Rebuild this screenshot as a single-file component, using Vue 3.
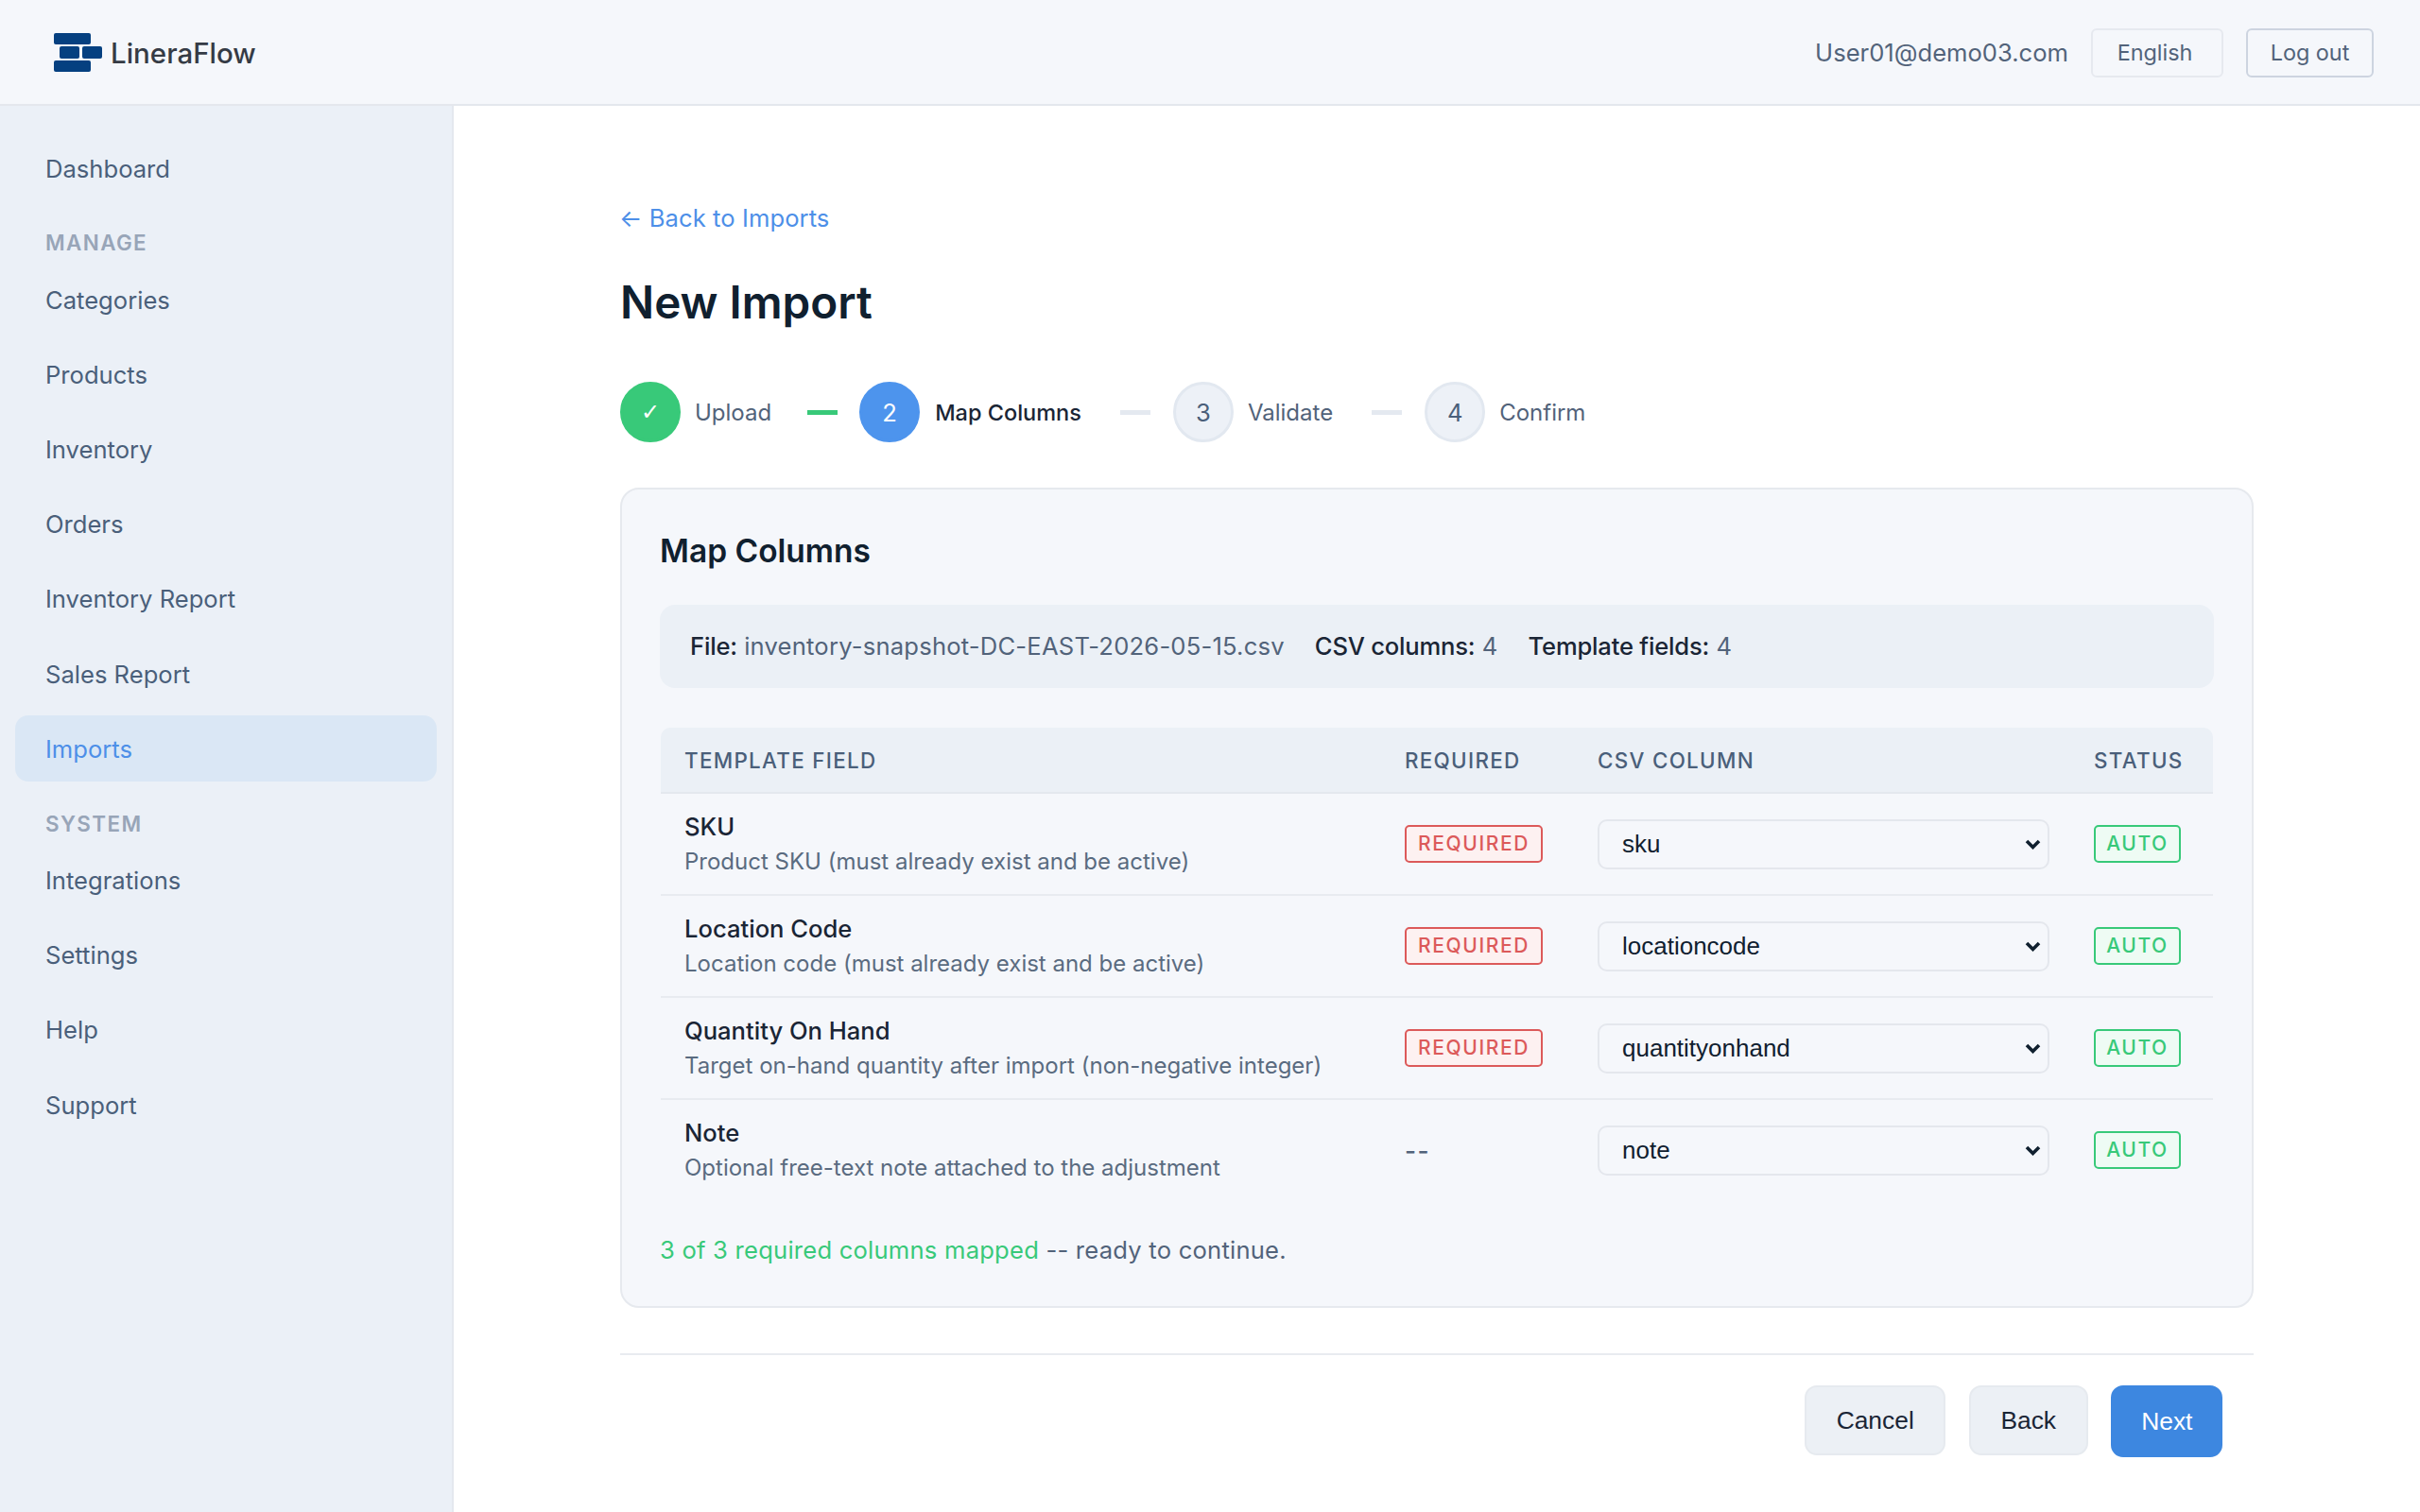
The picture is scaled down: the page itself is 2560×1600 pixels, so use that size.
<script setup>
import { ref } from "vue";

const mainNav = ["Categories", "Products", "Inventory", "Orders", "Inventory Report", "Sales Report", "Imports"];
const systemNav = ["Integrations", "Settings", "Help", "Support"];

const steps = [
  { num: "✓", label: "Upload", state: "done" },
  { num: "2", label: "Map Columns", state: "active" },
  { num: "3", label: "Validate", state: "" },
  { num: "4", label: "Confirm", state: "" },
];

const rows = ref([
  { name: "SKU", desc: "Product SKU (must already exist and be active)", required: true, column: "sku" },
  { name: "Location Code", desc: "Location code (must already exist and be active)", required: true, column: "locationcode" },
  { name: "Quantity On Hand", desc: "Target on-hand quantity after import (non-negative integer)", required: true, column: "quantityonhand" },
  { name: "Note", desc: "Optional free-text note attached to the adjustment", required: false, column: "note" },
]);
const csvColumns = ["sku", "locationcode", "quantityonhand", "note"];
</script>

<template>
  <div class="app">
    <header class="topbar">
      <div class="brand">
        <svg class="logo" width="51" height="41" viewBox="0 0 51 41">
          <rect x="0" y="0" width="39" height="12" rx="2" />
          <rect x="6" y="14" width="21" height="13" rx="2" />
          <rect x="30" y="14" width="21" height="13" rx="2" />
          <rect x="0" y="29" width="39" height="12" rx="2" />
        </svg>
        <span class="brand-name">LineraFlow</span>
      </div>
      <div class="user">
        <span class="email">User01@demo03.com</span>
        <button class="top-btn">English</button>
        <button class="top-btn dark">Log out</button>
      </div>
    </header>

    <div class="body">
      <aside class="sidebar">
        <a class="nav-item">Dashboard</a>
        <div class="nav-label">MANAGE</div>
        <a v-for="item in mainNav" :key="item" class="nav-item" :class="{ active: item === 'Imports' }">{{ item }}</a>
        <div class="nav-label">SYSTEM</div>
        <a v-for="item in systemNav" :key="item" class="nav-item">{{ item }}</a>
      </aside>

      <main class="main">
        <div class="content">
          <a class="back">← Back to Imports</a>
          <h1>New Import</h1>

          <div class="stepper">
            <template v-for="(step, i) in steps" :key="step.label">
              <span v-if="i > 0" class="line" :class="{ green: i === 1 }"></span>
              <div class="step" :class="step.state">
                <span class="circle">{{ step.num }}</span>
                <span class="step-label">{{ step.label }}</span>
              </div>
            </template>
          </div>

          <section class="card">
            <h2>Map Columns</h2>
            <div class="file-bar">
              <span><b>File:</b> inventory-snapshot-DC-EAST-2026-05-15.csv</span>
              <span><b>CSV columns:</b> 4</span>
              <span><b>Template fields:</b> 4</span>
            </div>

            <table>
              <colgroup>
                <col style="width: 762px" />
                <col style="width: 204px" />
                <col style="width: 525px" />
                <col />
              </colgroup>
              <thead>
                <tr>
                  <th>TEMPLATE FIELD</th>
                  <th>REQUIRED</th>
                  <th>CSV COLUMN</th>
                  <th>STATUS</th>
                </tr>
              </thead>
              <tbody>
                <tr v-for="row in rows" :key="row.name">
                  <td>
                    <div class="field-name">{{ row.name }}</div>
                    <div class="field-desc">{{ row.desc }}</div>
                  </td>
                  <td>
                    <span v-if="row.required" class="badge red">REQUIRED</span>
                    <span v-else class="dash">--</span>
                  </td>
                  <td>
                    <div class="select-wrap">
                      <select v-model="row.column">
                        <option v-for="c in csvColumns" :key="c">{{ c }}</option>
                      </select>
                      <svg class="chevron" width="17" height="11" viewBox="0 0 17 11">
                        <path d="M2 2 L8.5 8.5 L15 2" fill="none" stroke="#10202f" stroke-width="3.6" />
                      </svg>
                    </div>
                  </td>
                  <td><span class="badge green">AUTO</span></td>
                </tr>
              </tbody>
            </table>

            <p class="note"><span>3 of 3 required columns mapped</span> -- ready to continue.</p>
          </section>

          <div class="actions">
            <button class="btn">Cancel</button>
            <button class="btn">Back</button>
            <button class="btn primary">Next</button>
          </div>
        </div>
      </main>
    </div>
  </div>
</template>

<style>
html,
body {
  margin: 0;
  background: #fff;
}
</style>

<style scoped>
.app {
  width: 2560px;
  height: 1600px;
  overflow: hidden;
  font-family: Inter, "Liberation Sans", sans-serif;
  font-size: 25.6px;
  color: #1a2535;
  display: flex;
  flex-direction: column;
}
.topbar {
  height: 112px;
  box-sizing: border-box;
  background: #f5f7fb;
  border-bottom: 2px solid #e4e7ed;
  display: flex;
  align-items: center;
  justify-content: space-between;
  padding: 1px 49px 0 57px;
  flex-shrink: 0;
}
.brand {
  display: flex;
  align-items: center;
  gap: 9px;
}
.logo rect {
  fill: #054080;
}
.brand-name {
  font-size: 29.5px;
  font-weight: 500;
  color: #353b45;
}
.user {
  display: flex;
  align-items: center;
}
.email {
  color: #52637a;
  margin-right: 24px;
}
.top-btn {
  font-family: inherit;
  font-size: 23.4px;
  color: #52637a;
  background: transparent;
  border: 2px solid #e6e9ef;
  border-radius: 6px;
  height: 52px;
  width: 140px;
  padding: 0 5px 0 0;
  margin-right: 24px;
}
.top-btn.dark {
  border-color: #cdd4e0;
  width: 135px;
  padding: 0;
  margin-right: 0;
}
.body {
  flex: 1;
  display: flex;
  min-height: 0;
}
.sidebar {
  width: 480px;
  box-sizing: border-box;
  background: #ebf0f7;
  border-right: 2px solid #e4e8ef;
  padding: 31px 16px 0;
  display: flex;
  flex-direction: column;
  flex-shrink: 0;
}
.nav-item {
  height: 70px;
  margin-bottom: 9.2px;
  padding-left: 32px;
  border-radius: 14px;
  display: flex;
  align-items: center;
  color: #4a5f7a;
  flex-shrink: 0;
}
.nav-item.active {
  background: #dae7f5;
  color: #4d8fe8;
}
.nav-label {
  height: 60px;
  box-sizing: border-box;
  padding: 20px 0 10px 32px;
  line-height: 30px;
  font-size: 22.4px;
  font-weight: 600;
  letter-spacing: 1.4px;
  color: #98a5b8;
  flex-shrink: 0;
}
.main {
  flex: 1;
  background: #fff;
}
.content {
  width: 1728px;
  margin: 0 auto;
  padding-top: 102px;
}
.back {
  display: block;
  height: 34px;
  line-height: 34px;
  margin-left: -1px;
  letter-spacing: 0.07px;
  color: #4d8fe8;
}
h1 {
  margin: 42px 0 0;
  height: 60px;
  line-height: 60px;
  font-size: 47.6px;
  font-weight: 600;
  color: #10202f;
}
.stepper {
  margin-top: 54px;
  display: flex;
  align-items: center;
}
.step {
  display: flex;
  align-items: center;
  gap: 15px;
}
.circle {
  width: 64px;
  height: 64px;
  box-sizing: border-box;
  border-radius: 50%;
  border: 3px solid #e2e8f0;
  background: #edf1f7;
  color: #4a5f7a;
  display: flex;
  align-items: center;
  justify-content: center;
}
.step-label {
  color: #52637a;
  font-size: 24px;
}
.step.done .circle {
  background: #38c979;
  border-color: #38c979;
  color: #fff;
  font-family: "DejaVu Sans", sans-serif;
  font-size: 24px;
}
.step.active {
  gap: 16px;
}
.step.active .circle {
  background: #4d94ed;
  border-color: #4d94ed;
  color: #fff;
}
.step.active .step-label {
  color: #1a2535;
  font-size: 23.5px;
  font-weight: 500;
}
.line {
  width: 32px;
  height: 5px;
  margin: 0 24px 0 41px;
  background: #e4e9f0;
}
.line.green {
  margin: 0 23px 0 38px;
  background: #38c979;
}
.card {
  margin-top: 48px;
  height: 868px;
  box-sizing: border-box;
  background: #f5f7fb;
  border: 2px solid #e6e9ee;
  border-radius: 20px;
  padding: 43px 40px 0;
}
h2 {
  margin: 0;
  height: 44px;
  line-height: 44px;
  font-size: 33.5px;
  font-weight: 600;
  color: #10202f;
}
.file-bar {
  margin-top: 35px;
  height: 88px;
  box-sizing: border-box;
  background: #ebf0f6;
  border-radius: 16px;
  padding: 0 32px 2px;
  display: flex;
  align-items: center;
  gap: 32px;
  color: #52637a;
  letter-spacing: 0.2px;
}
.file-bar b {
  font-weight: 500;
  color: #1a2535;
  letter-spacing: -0.2px;
}
table {
  margin: 42px 0 0 1px;
  width: 1642px;
  table-layout: fixed;
  border-collapse: separate;
  border-spacing: 0;
}
th {
  height: 70px;
  padding: 0 25px;
  text-align: left;
  font-size: 22.4px;
  font-weight: 500;
  letter-spacing: 1.3px;
  color: #4a5f7a;
  background: #ebf0f6;
  border-bottom: 2px solid #e4e8ee;
  box-sizing: border-box;
}
th:first-child {
  border-top-left-radius: 10px;
}
th:last-child {
  border-top-right-radius: 10px;
}
td {
  height: 108px;
  box-sizing: border-box;
  padding: 0 25px;
  border-bottom: 2px solid #e8ebf0;
}
td:first-child {
  padding-top: 1px;
}
tbody tr:last-child td {
  border-bottom-color: transparent;
}
.field-name {
  font-weight: 500;
  line-height: 34px;
}
.field-desc {
  font-size: 24px;
  line-height: 36px;
  padding-top: 2px;
  color: #5a6b80;
}
.badge {
  display: inline-block;
  box-sizing: border-box;
  height: 40px;
  line-height: 36px;
  border: 2px solid;
  border-radius: 5px;
  font-size: 21px;
  font-weight: 500;
  letter-spacing: 1.6px;
  text-align: center;
  vertical-align: middle;
}
.badge.red {
  width: 146px;
  color: #dc5a5a;
  border-color: #dc5a5a;
  background: #fdf1f1;
}
.badge.green {
  width: 92px;
  color: #38c979;
  border-color: #38c979;
  background: #eefbf4;
}
.dash {
  color: #52637a;
  font-size: 26px;
  font-weight: 500;
  letter-spacing: 1.5px;
}
.select-wrap {
  position: relative;
  width: 478px;
  height: 53px;
}
select {
  appearance: none;
  width: 100%;
  height: 100%;
  box-sizing: border-box;
  padding: 0 40px 0 24px;
  background: #f5f7fb;
  border: 2px solid #e4e7ed;
  border-radius: 10px;
  font-family: "Liberation Sans", Arial, sans-serif;
  font-size: 26px;
  color: #10202f;
}
.chevron {
  position: absolute;
  right: 9px;
  top: 21px;
  pointer-events: none;
}
.note {
  margin: 33px 0 0;
  line-height: 36px;
  color: #52637a;
  letter-spacing: 0.22px;
}
.note span {
  color: #38c979;
}
.actions {
  margin-top: 48px;
  border-top: 2px solid #e8ebf0;
  padding: 32px 32.6px 0 0;
  display: flex;
  justify-content: flex-end;
  align-items: flex-start;
  gap: 24.6px;
}
.btn {
  height: 74px;
  box-sizing: border-box;
  padding: 0 31.5px;
  font-family: "Liberation Sans", Arial, sans-serif;
  font-size: 26.4px;
  color: #1a2535;
  background: #ecf0f5;
  border: 2px solid #e6eaef;
  border-radius: 13px;
}
.btn.primary {
  height: 76px;
  padding: 0 30px;
  background: #3d87e0;
  border-color: #3d87e0;
  color: #fff;
}
</style>
